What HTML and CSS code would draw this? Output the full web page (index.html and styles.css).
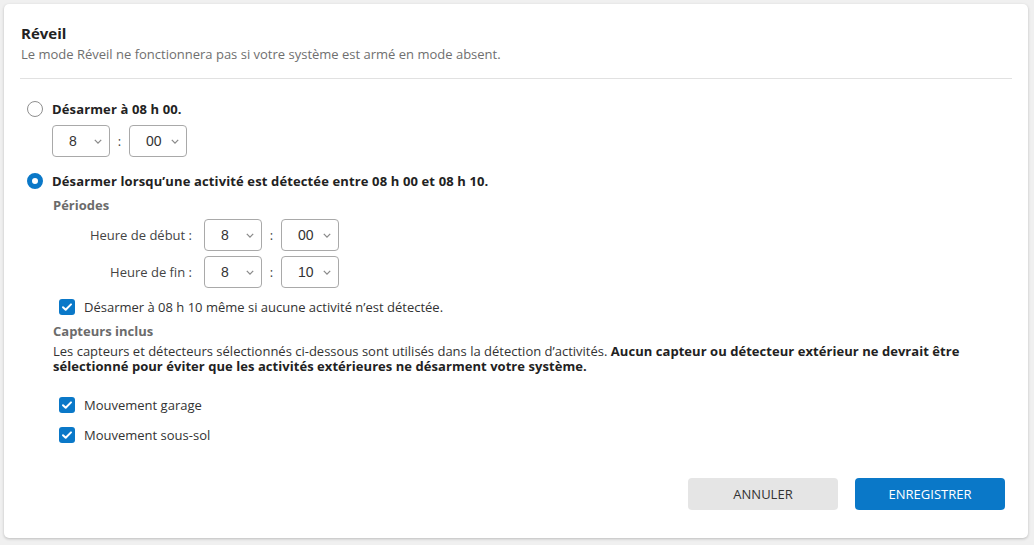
FILE: index.html
```html
<!DOCTYPE html>
<html lang="fr">
<head>
<meta charset="utf-8">
<title>Réveil</title>
<link rel="stylesheet" href="styles.css">
</head>
<body>
<div class="card">
  <header class="card-head">
    <h1 class="title">Réveil</h1>
    <p class="subtitle">Le mode Réveil ne fonctionnera pas si votre système est armé en mode absent.</p>
  </header>

  <section class="options">
    <div class="radio-row">
      <span class="radio"></span>
      <span class="radio-label">Désarmer à 08 h 00.</span>
    </div>
    <div class="time-row indent">
      <div class="select"><span>8</span><svg class="chev" viewBox="0 0 10 6"><path d="M1 1l4 4 4-4"/></svg></div>
      <span class="colon">:</span>
      <div class="select"><span>00</span><svg class="chev" viewBox="0 0 10 6"><path d="M1 1l4 4 4-4"/></svg></div>
    </div>

    <div class="radio-row second">
      <span class="radio checked"></span>
      <span class="radio-label">Désarmer lorsqu’une activité est détectée entre 08 h 00 et 08 h 10.</span>
    </div>

    <div class="sub indent">
      <div class="sub-title">Périodes</div>
      <div class="periods">
        <span class="p-label">Heure de début :</span>
        <div class="time-row">
          <div class="select"><span>8</span><svg class="chev" viewBox="0 0 10 6"><path d="M1 1l4 4 4-4"/></svg></div>
          <span class="colon">:</span>
          <div class="select"><span>00</span><svg class="chev" viewBox="0 0 10 6"><path d="M1 1l4 4 4-4"/></svg></div>
        </div>
        <span class="p-label">Heure de fin :</span>
        <div class="time-row">
          <div class="select"><span>8</span><svg class="chev" viewBox="0 0 10 6"><path d="M1 1l4 4 4-4"/></svg></div>
          <span class="colon">:</span>
          <div class="select"><span>10</span><svg class="chev" viewBox="0 0 10 6"><path d="M1 1l4 4 4-4"/></svg></div>
        </div>
      </div>

      <div class="check-row first-check">
        <span class="check"><svg viewBox="0 0 16 16"><path d="M4 8.2l2.7 2.6L12 5.4"/></svg></span>
        <span>Désarmer à 08 h 10 même si aucune activité n’est détectée.</span>
      </div>

      <div class="sub-title capteurs">Capteurs inclus</div>
      <p class="desc">Les capteurs et détecteurs sélectionnés ci-dessous sont utilisés dans la détection d’activités. <b>Aucun capteur ou détecteur extérieur ne devrait être<br>sélectionné pour éviter que les activités extérieures ne désarment votre système.</b></p>

      <div class="sensors">
        <div class="check-row">
          <span class="check"><svg viewBox="0 0 16 16"><path d="M4 8.2l2.7 2.6L12 5.4"/></svg></span>
          <span>Mouvement garage</span>
        </div>
        <div class="check-row">
          <span class="check"><svg viewBox="0 0 16 16"><path d="M4 8.2l2.7 2.6L12 5.4"/></svg></span>
          <span>Mouvement sous-sol</span>
        </div>
      </div>
    </div>
  </section>

  <footer class="actions">
    <button class="btn btn-cancel">ANNULER</button>
    <button class="btn btn-save">ENREGISTRER</button>
  </footer>
</div>
</body>
</html>
```

FILE: styles.css
```css
* { box-sizing: border-box; }

html, body {
  margin: 0;
  padding: 0;
  background: #f0f0f0;
}

body {
  padding: 4px 6px 7px 4px;
  font-family: "Open Sans", "Segoe UI", sans-serif;
  font-size: 13px;
  color: #333;
}

.card {
  background: #fff;
  border-radius: 5px;
  box-shadow: 0 1px 3px rgba(0, 0, 0, 0.22);
  height: 534px;
  padding: 19px 16px 0 16px;
  display: flex;
  flex-direction: column;
}

.card-head {
  border-bottom: 1px solid #e1e1e1;
  padding-bottom: 15px;
  padding-left: 1px;
}

.title {
  margin: 0;
  font-size: 15px;
  line-height: 20px;
  font-weight: 700;
  color: #222;
}

.subtitle {
  margin: 2px 0 0;
  line-height: 18px;
  font-size: 13px;
  color: #6f6f6f;
}

.options {
  padding: 20px 0 0 7px;
}

.radio-row {
  display: flex;
  align-items: center;
  gap: 9px;
  height: 20px;
}

.radio-row.second {
  margin-top: 14px;
}

.radio {
  width: 16px;
  height: 16px;
  border-radius: 50%;
  border: 1px solid #8f8f8f;
  background: #fff;
  flex: none;
}

.radio.checked {
  border: 5px solid #0a78c8;
  background: #fff;
}

.radio-label {
  font-weight: 700;
  color: #222;
  letter-spacing: 0.13px;
}

.indent {
  margin-left: 25px;
}

.time-row {
  display: flex;
  align-items: center;
}

.options > .time-row {
  margin-top: 6px;
}

.select {
  width: 58px;
  height: 32px;
  border: 1px solid #a9a9a9;
  border-radius: 4px;
  display: flex;
  align-items: center;
  justify-content: space-between;
  padding: 0 7px 0 16px;
  font-family: "Liberation Sans", Arial, sans-serif;
  font-size: 14px;
  color: #333;
}

.chev {
  width: 8px;
  height: 5px;
  fill: none;
  stroke: #8a8a8a;
  stroke-width: 1.6;
}

.colon {
  width: 19px;
  text-align: center;
  color: #444;
}

.sub {
  padding-left: 1px;
}

.sub-title {
  margin-top: 5px;
  line-height: 18px;
  font-weight: 700;
  color: #6b6b6b;
}

.periods {
  display: grid;
  grid-template-columns: 139px auto;
  column-gap: 12px;
  row-gap: 5px;
  align-items: center;
  margin-top: 5px;
}

.p-label {
  text-align: right;
  color: #444;
}

.check-row {
  display: flex;
  align-items: center;
  gap: 9px;
  line-height: 18px;
  color: #333;
}

.first-check {
  margin-top: 10px;
  margin-left: 6px;
}

.check {
  width: 16px;
  height: 16px;
  border-radius: 3px;
  background: #0a78c8;
  display: flex;
  flex: none;
}

.check svg {
  width: 16px;
  height: 16px;
  fill: none;
  stroke: #fff;
  stroke-width: 2;
  stroke-linecap: round;
  stroke-linejoin: round;
}

.capteurs {
  margin-top: 6px;
}

.desc {
  margin: 4px 0 0;
  line-height: 15px;
  color: #333;
}

.desc b {
  color: #222;
  letter-spacing: 0.05px;
}

.sensors {
  margin-top: 22px;
  margin-left: 6px;
  display: flex;
  flex-direction: column;
  gap: 12px;
}

.actions {
  margin-top: auto;
  padding: 0 7px 28px 0;
  display: flex;
  justify-content: flex-end;
  gap: 17px;
}

.btn {
  width: 150px;
  height: 32px;
  border: 0;
  border-radius: 4px;
  font-family: "Open Sans", "Segoe UI", sans-serif;
  font-size: 13px;
  cursor: pointer;
}

.btn-cancel {
  background: #e5e5e5;
  color: #333;
}

.btn-save {
  background: #0a78c8;
  color: #fff;
}
```
